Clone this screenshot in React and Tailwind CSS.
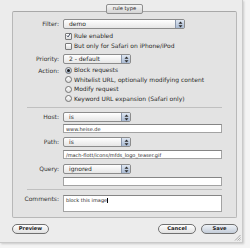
import React from 'react';

function Arrows() {
  return (
    <svg width="5" height="7" viewBox="0 0 5 7">
      <path d="M2.5 0.5 L4.5 2.8 L0.5 2.8 Z" fill="#2a2a2a" />
      <path d="M2.5 6.5 L4.5 4.2 L0.5 4.2 Z" fill="#2a2a2a" />
    </svg>
  );
}

function Select({ value, width }) {
  return (
    <div className={`flex h-[10px] items-center rounded-[2px] border border-[#8c8c8c] bg-linear-to-b from-white to-[#e6e6e6] ${width}`}>
      <span className="flex-1 pl-[5px] leading-none text-[#2a2a2a]">{value}</span>
      <span className="flex h-full w-[9px] items-center justify-center rounded-r-[1px] border-l border-[#8a97ac] bg-linear-to-b from-[#dfe7f2] to-[#a9bad3]">
        <Arrows />
      </span>
    </div>
  );
}

function Field({ children, className = 'h-[9px]' }) {
  return (
    <div className={`w-[159px] border border-[#a3a3a3] border-t-[#858585] bg-white pl-[2px] text-[5px] leading-[8px] text-[#2a2a2a] ${className}`}>
      {children}
    </div>
  );
}

function Row({ label, children, className = '' }) {
  return (
    <div className={`flex items-center ${className}`}>
      <span className="w-[46px] shrink-0 text-right leading-none text-[#333]">{label}</span>
      <div className="ml-[4px] flex items-center">{children}</div>
    </div>
  );
}

function Check({ checked, label, className = '' }) {
  return (
    <div className={`flex h-[10px] items-center pl-[52px] ${className}`}>
      <span className="flex h-[7px] w-[7px] items-center justify-center rounded-[1px] border border-[#7a7a7a] bg-linear-to-b from-white to-[#dcdcdc]">
        {checked && (
          <svg width="7" height="7" viewBox="0 0 7 7" className="-mt-[1px]">
            <path d="M1.3 3.6 L2.9 5.4 L6 0.8" stroke="#1e2a44" strokeWidth="1.2" fill="none" />
          </svg>
        )}
      </span>
      <span className="ml-[2px] leading-none text-[#2a2a2a]">{label}</span>
    </div>
  );
}

function Radio({ on, label }) {
  return (
    <div className="flex h-[9.5px] items-center">
      <span className={`flex h-[7px] w-[7px] items-center justify-center rounded-full border border-[#747474] bg-linear-to-b ${on ? 'from-[#e3eaf4] to-[#a7b8d0]' : 'from-white to-[#dcdcdc]'}`}>
        {on && <span className="h-[3px] w-[3px] rounded-full bg-[#1b1b1b]" />}
      </span>
      <span className="ml-[2px] leading-none text-[#2a2a2a]">{label}</span>
    </div>
  );
}

function Button({ children, primary }) {
  return (
    <div className={`flex h-[10px] items-center justify-center rounded-full border border-[#707070] text-[5.2px] font-bold leading-none text-[#222] bg-linear-to-b ${primary ? 'from-[#eef2f7] to-[#c3ccd8]' : 'from-white to-[#e0e0e0]'}`}>
      {children}
    </div>
  );
}

export default function App() {
  return (
    <div className="h-[248px] w-[250px] bg-[#f4f4f4] font-['DejaVu_Sans',sans-serif] text-[6px]">
      <div className="relative flex h-[243px] w-[243px] flex-col border-r border-b border-[#c9c9c9] bg-[#ececec] pl-[12px] pt-[11px] shadow-[1px_1px_2px_rgba(0,0,0,0.18)]">
        <div className="relative flex h-[207px] w-[225px] flex-col rounded-[2px] border border-[#b8b8b8] border-t-[#a8a8a8] bg-[#e3e3e3]">
          <div className="absolute -top-[8px] left-[93px] flex h-[10px] w-[37px] items-center justify-center rounded-[2px] border border-[#8e8e8e] bg-linear-to-b from-[#f4f4f4] to-[#d4d4d4] text-[5.2px] leading-none text-[#2a2a2a]">
            rule type
          </div>

          <Row label="Filter:" className="mt-[7px] h-[10px]">
            <Select value="demo" width="w-[122px]" />
          </Row>
          <Check checked label="Rule enabled" className="mt-[2px]" />
          <Check label="But only for Safari on iPhone/iPod" />
          <Row label="Priority:" className="mt-[3px] h-[10px]">
            <Select value="2 - default" width="w-[68px]" />
          </Row>
          <div className="mt-[1.5px] flex">
            <span className="w-[46px] shrink-0 pt-[2.5px] text-right leading-none text-[#333]">Action:</span>
            <div className="ml-[6px] flex flex-col">
              <Radio on label="Block requests" />
              <Radio label="Whitelist URL, optionally modifying content" />
              <Radio label="Modify request" />
              <Radio label="Keyword URL expansion (Safari only)" />
            </div>
          </div>

          <div className="mx-[14px] mt-[3.5px] h-px bg-[#c0c0c0]" />

          <Row label="Host:" className="mt-[4px] h-[10px]">
            <Select value="is" width="w-[68px]" />
          </Row>
          <div className="ml-[50px] mt-[2px]">
            <Field>www.heise.de</Field>
          </div>
          <Row label="Path:" className="mt-[4px] h-[10px]">
            <Select value="is" width="w-[68px]" />
          </Row>
          <div className="ml-[50px] mt-[3px]">
            <Field>/mach-flott/icons/mfds_logo_teaser.gif</Field>
          </div>
          <Row label="Query:" className="mt-[5px] h-[10px]">
            <Select value="ignored" width="w-[68px]" />
          </Row>
          <div className="ml-[50px] mt-[3px]">
            <Field />
          </div>

          <div className="mx-[14px] mt-[3px] h-px bg-[#c0c0c0]" />

          <div className="mt-[5px] flex">
            <span className="w-[46px] shrink-0 pt-[1px] text-right leading-none text-[#333]">Comments:</span>
            <div className="ml-[4px]">
              <Field className="h-[17px]">
                block this image<span className="inline-block h-[5px] w-px translate-y-[1px] bg-black" />
              </Field>
            </div>
          </div>
        </div>

        <div className="mt-[6px] flex w-[226px] items-center">
          <div className="w-[37px]"><Button>Preview</Button></div>
          <div className="ml-auto w-[38px]"><Button>Cancel</Button></div>
          <div className="ml-[5px] w-[37px]"><Button primary>Save</Button></div>
        </div>

        <svg className="absolute bottom-[1px] right-[1px]" width="7" height="7" viewBox="0 0 7 7">
          <path d="M6.5 1 L1 6.5 M6.5 3.5 L3.5 6.5 M6.5 5.5 L5.5 6.5" stroke="#9a9a9a" strokeWidth="0.8" />
        </svg>
      </div>
    </div>
  );
}
